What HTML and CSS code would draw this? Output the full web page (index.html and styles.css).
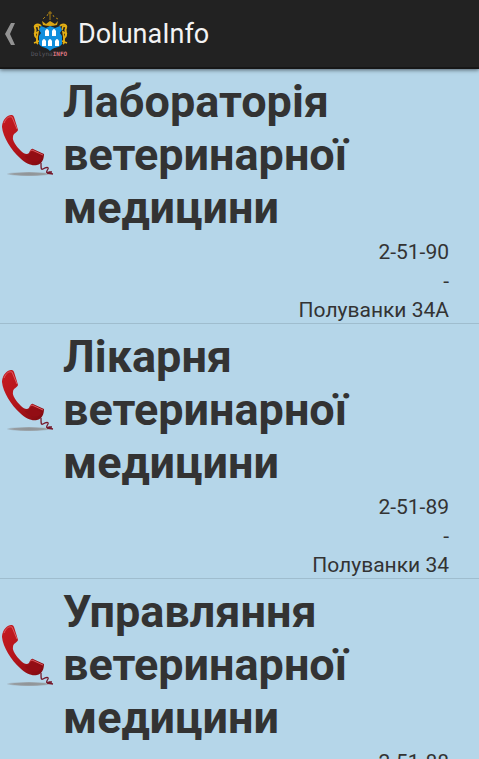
FILE: index.html
```html
<!DOCTYPE html>
<html lang="uk">
<head>
<meta charset="utf-8">
<meta name="viewport" content="width=device-width, initial-scale=1">
<title>DolunaInfo</title>
<link rel="stylesheet" href="styles.css">
</head>
<body>
<svg class="defs" aria-hidden="true">
  <defs>
    <linearGradient id="red" x1="0" y1="0" x2="1" y2="1">
      <stop offset="0" stop-color="#c61b21"/>
      <stop offset="0.5" stop-color="#b3141a"/>
      <stop offset="1" stop-color="#7d0a10"/>
    </linearGradient>
    <radialGradient id="shade">
      <stop offset="0" stop-color="#8d9194"/>
      <stop offset="0.7" stop-color="#979da1"/>
      <stop offset="1" stop-color="#a9c2d1"/>
    </radialGradient>
    <symbol id="phone" viewBox="0 0 56 66">
      <ellipse cx="29" cy="61" rx="22" ry="2" fill="url(#shade)"/>
      <path d="M41 50C41 55 41 57 43 56C46 54 49 54 48 56C46 59 46 60 49 59L52 59M47 60L53 61" fill="none" stroke="#75182a" stroke-width="1.3"/>
      <path d="M11 2C5 3 2 9 2 14C3 24 11 37 20 45C26 51 32 53 37 52C42 51 44 46 44 41L33 36C31 35 30 38 29 40C27 42 24 41 21 38C16 33 12 27 13 24C13 20 17 20 18 17C17 13 15 7 14 4C13 2 12 2 11 2Z" fill="url(#red)"/>
      <path d="M4 10C6 5 9 3 12 4L17 16M30 38L32 37L43 42" fill="none" stroke="#dc5b61" stroke-width="1" stroke-linejoin="round"/>
      <path d="M31 39L42 44C40 49 34 50 30 47C27 46 25 44 25 43C28 43 30 42 31 39Z" fill="#930d14"/>
    </symbol>
  </defs>
</svg>
<header class="bar">
  <button class="home" type="button" aria-label="DolunaInfo">
    <svg class="back" viewBox="0 0 12 22" aria-hidden="true"><path d="M7 0H11L6 11L11 22H7L1 11Z" fill="#929292"/></svg>
    <svg class="logo" viewBox="0 0 42 48" aria-hidden="true">
      <g fill="none" stroke="#e3ae14" stroke-width="2">
        <path d="M12 16C9 13 5 15 6 18C8 21 4 24 7 27C10 29 6 32 9 34"/>
        <path d="M31 16C34 13 38 15 37 18C35 21 39 24 36 27C33 29 37 32 34 34"/>
        <path d="M5 17L9 16L10 20M5 24L9 22L8 28M5 33L10 31M38 17L34 16L33 20M38 24L34 22L35 28M38 33L33 31" stroke-width="1.6"/>
      </g>
      <path d="M14 15L13 11L17 14L21 11L26 14L29 11L28 15Q21 17 14 15Z" fill="#d8a516"/>
      <path d="M14 9L16 7M18 6L19 4M21 10V1M24 5L25 7M27 8L29 9M19 3H23" stroke="#a97e14" stroke-width="1"/>
      <path d="M12 16L17 18L21 16L26 18L31 16L33 20L31 23L33 26V34C31 38 24 37 21 41C18 37 12 38 10 34V26L12 23L10 20Z" fill="#108fdd"/>
      <path d="M16 26V21Q18 17 20 21V26ZM23 26V21Q25 17 27 21V26ZM13 36V31Q15 27 17 31V36ZM19 36V31Q21 27 23 31V36ZM26 36V31Q28 27 30 31V36Z" fill="#fff"/>
      <text class="logo-text" x="2" y="46" fill="#5c5c64">Dolyna<tspan class="logo-info" fill="#dc7680">INFO</tspan></text>
    </svg>
    <span class="title">DolunaInfo</span>
  </button>
</header>
<main class="list">
  <article class="item">
    <svg class="phone" aria-hidden="true"><use href="#phone"/></svg>
    <div class="content">
      <h2 class="name">Лабораторія ветеринарної медицини</h2>
      <p class="line">2-51-90</p>
      <p class="line">-</p>
      <p class="line">Полуванки 34А</p>
    </div>
  </article>
  <article class="item">
    <svg class="phone" aria-hidden="true"><use href="#phone"/></svg>
    <div class="content">
      <h2 class="name">Лікарня ветеринарної медицини</h2>
      <p class="line">2-51-89</p>
      <p class="line">-</p>
      <p class="line">Полуванки 34</p>
    </div>
  </article>
  <article class="item">
    <svg class="phone" aria-hidden="true"><use href="#phone"/></svg>
    <div class="content">
      <h2 class="name">Управляння ветеринарної медицини</h2>
      <p class="line">2-51-88</p>
    </div>
  </article>
</main>
</body>
</html>
```
FILE: styles.css
```css
* {
  box-sizing: border-box;
}

body {
  margin: 0;
  height: 100vh;
  display: flex;
  flex-direction: column;
  overflow: hidden;
  background: #b5d6e9;
  color: #333;
  font-family: Roboto, "Noto Sans", sans-serif;
}

.defs {
  position: absolute;
  width: 0;
  height: 0;
}

.bar {
  flex: none;
  display: flex;
  height: 69px;
  background: #222;
  border-bottom: 2px solid #171717;
  box-shadow: 0 1px 4px #52616a;
  z-index: 1;
}

.home {
  display: flex;
  align-items: center;
  padding: 0 4px;
  border: 0;
  background: none;
  color: #f3f3f3;
  font: inherit;
}

.back {
  width: 12px;
  height: 22px;
  margin-right: 13px;
}

.logo {
  width: 42px;
  height: 48px;
}

.logo-text {
  font: 6px "DejaVu Sans Mono", monospace;
}

.logo-info {
  font-weight: bold;
}

.title {
  margin-left: 7px;
  font-size: 27px;
  line-height: 32px;
}

.list {
  flex: 1;
  min-height: 0;
  overflow-y: auto;
  scrollbar-width: none;
}

.item {
  display: flex;
  align-items: flex-start;
  padding-top: 6px;
  border-bottom: 1px solid #9fbdce;
}

.phone {
  flex: none;
  width: 56px;
  height: 66px;
  margin-top: 38px;
}

.content {
  flex: 1;
  padding: 0 30px 0 7px;
  margin-bottom: -2px;
}

.name {
  margin: 0 0 4px;
  max-width: 320px;
  font-size: 45px;
  line-height: 53px;
}

.line {
  margin: 0;
  text-align: right;
  font-size: 21px;
  line-height: 29px;
}
```
